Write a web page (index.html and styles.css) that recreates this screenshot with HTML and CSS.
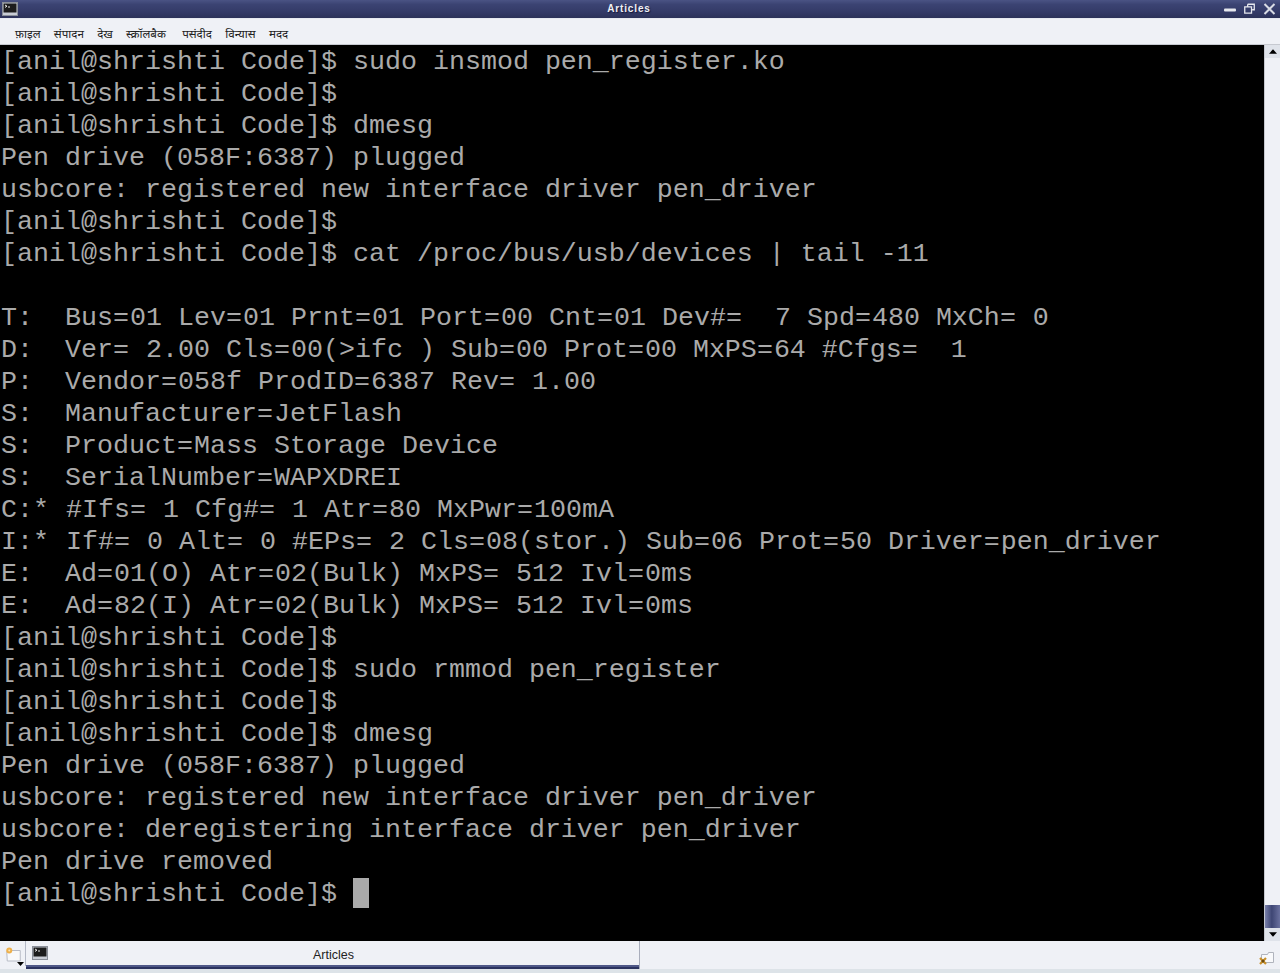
FILE: index.html
```html
<!DOCTYPE html>
<html lang="hi">
<head>
<meta charset="utf-8">
<title>Articles</title>
<link rel="stylesheet" href="styles.css">
</head>
<body>
<div class="window">
  <header class="titlebar">
    <svg class="term-icon" viewBox="0 0 16 14" aria-hidden="true"><rect x="0.5" y="0.5" width="15" height="13" fill="#c8ccd4" stroke="#8a8f99"/><rect x="1.5" y="1.5" width="13" height="9" fill="#1c1c1c"/><path d="M3 3l2 1.2L3 5.4M6 5h2" stroke="#e8e8e8" fill="none"/></svg>
    <div class="title">Articles</div>
    <div class="winbtns">
      <svg viewBox="0 0 12 12" class="winbtn min" aria-hidden="true"><rect x="0" y="5.500" width="12" height="3" rx="1" fill="#e6e8ee"/></svg>
      <svg viewBox="0 0 12 12" class="winbtn restore" aria-hidden="true"><path d="M4 .8h7.200v6H9M4 .8v2.800M.8 3.600h7.400v6.800H.8z" fill="none" stroke="#e6e8ee" stroke-width="1.400"/></svg>
      <svg viewBox="0 0 12 12" class="winbtn close" aria-hidden="true"><path d="M1 1l10 10M11 1L1 11" stroke="#d8dbe4" stroke-width="2"/></svg>
    </div>
  </header>
  <nav class="menubar">
    <span class="menu">फ़ाइल</span><span class="menu">संपादन</span><span class="menu">देख</span><span class="menu wide">स्क्रॉलबैक</span><span class="menu">पसंदीद</span><span class="menu">विन्यास</span><span class="menu">मदद</span>
  </nav>
  <main class="content">
    <div class="terminal">
      <div class="line">[anil@shrishti Code]$ sudo insmod pen_register.ko</div>
      <div class="line">[anil@shrishti Code]$</div>
      <div class="line">[anil@shrishti Code]$ dmesg</div>
      <div class="line">Pen drive (058F:6387) plugged</div>
      <div class="line">usbcore: registered new interface driver pen_driver</div>
      <div class="line">[anil@shrishti Code]$</div>
      <div class="line">[anil@shrishti Code]$ cat /proc/bus/usb/devices | tail -11</div>
      <div class="line"></div>
      <div class="line">T:  Bus<span class="w">=</span>01 Lev<span class="w">=</span>01 Prnt<span class="w">=</span>01 Port<span class="w">=</span>00 Cnt<span class="w">=</span>01 Dev#<span class="w">=</span>  7 Spd<span class="w">=</span>480 MxCh<span class="w">=</span> 0</div>
      <div class="line">D:  Ver<span class="w">=</span> 2.00 Cls<span class="w">=</span>00(&gt;ifc ) Sub<span class="w">=</span>00 Prot<span class="w">=</span>00 MxPS<span class="w">=</span>64 #Cfgs<span class="w">=</span>  1</div>
      <div class="line">P:  Vendor<span class="w">=</span>058f ProdID<span class="w">=</span>6387 Rev<span class="w">=</span> 1.00</div>
      <div class="line">S:  Manufacturer<span class="w">=</span>JetFlash</div>
      <div class="line">S:  Product<span class="w">=</span>Mass Storage Device</div>
      <div class="line">S:  SerialNumber<span class="w">=</span>WAPXDREI</div>
      <div class="line">C:<span class="w">*</span> #Ifs<span class="w">=</span> 1 Cfg#<span class="w">=</span> 1 Atr<span class="w">=</span>80 MxPwr<span class="w">=</span>100mA</div>
      <div class="line">I:<span class="w">*</span> If#<span class="w">=</span> 0 Alt<span class="w">=</span> 0 #EPs<span class="w">=</span> 2 Cls<span class="w">=</span>08(stor.) Sub<span class="w">=</span>06 Prot<span class="w">=</span>50 Driver<span class="w">=</span>pen_driver</div>
      <div class="line">E:  Ad<span class="w">=</span>01(O) Atr<span class="w">=</span>02(Bulk) MxPS<span class="w">=</span> 512 Ivl<span class="w">=</span>0ms</div>
      <div class="line">E:  Ad<span class="w">=</span>82(I) Atr<span class="w">=</span>02(Bulk) MxPS<span class="w">=</span> 512 Ivl<span class="w">=</span>0ms</div>
      <div class="line">[anil@shrishti Code]$</div>
      <div class="line">[anil@shrishti Code]$ sudo rmmod pen_register</div>
      <div class="line">[anil@shrishti Code]$</div>
      <div class="line">[anil@shrishti Code]$ dmesg</div>
      <div class="line">Pen drive (058F:6387) plugged</div>
      <div class="line">usbcore: registered new interface driver pen_driver</div>
      <div class="line">usbcore: deregistering interface driver pen_driver</div>
      <div class="line">Pen drive removed</div>
      <div class="line">[anil@shrishti Code]$ <span class="cursor"></span></div>
    </div>
    <div class="scrollbar">
      <div class="arrow"><svg viewBox="0 0 9 5" class="tri" aria-hidden="true"><path d="M4.500 0L9 5H0z"/></svg></div>
      <div class="track"><div class="thumb"></div></div>
      <div class="arrow"><svg viewBox="0 0 9 5" class="tri" aria-hidden="true"><path d="M0 0h9L4.500 5z"/></svg></div>
    </div>
  </main>
  <footer class="taskbar">
    <div class="launcher">
      <svg class="launch-icon" viewBox="0.500 1 15.500 15" aria-hidden="true"><path d="M2 5.500h3l1-1h9.500v10.500h-13z" fill="#f8f9fb" stroke="#b8bcc6"/><circle cx="4.500" cy="4.500" r="3" fill="#eeb04a"/><circle cx="4.500" cy="4.500" r="1" fill="#fbe7b8"/></svg>
      <svg class="drop" viewBox="0 0 7 4" aria-hidden="true"><path d="M0 0h7L3.500 4z"/></svg>
    </div>
    <div class="task">
      <svg class="term-icon" viewBox="0 0 16 14" aria-hidden="true"><rect x="0.500" y="0.500" width="15" height="13" fill="#c8ccd4" stroke="#8a8f99"/><rect x="1.500" y="1.500" width="13" height="9" fill="#1c1c1c"/><path d="M3 3l2 1.200L3 5.400M6 5h2" stroke="#e8e8e8" fill="none"/></svg>
      <span class="task-label">Articles</span>
    </div>
    <div class="tray">
      <svg class="tray-icon" viewBox="0 0 16 16" aria-hidden="true"><path d="M2.500 4.500h6l1-2h5v10h-12z" fill="#f8f9fb" stroke="#b0b4bd"/><path d="M1 8l6 6M7 8l-6 6" stroke="#c8902a" stroke-width="2.200"/><circle cx="4" cy="11" r="1.500" fill="#6a4a10"/></svg>
    </div>
  </footer>
</div>
</body>
</html>
```
FILE: styles.css
```css
* { box-sizing: border-box; }
html, body { margin: 0; padding: 0; height: 100%; background: #000; overflow: hidden; }
.window { width: 1280px; height: 973px; display: flex; flex-direction: column; }

.titlebar {
  height: 19px; flex: none; display: flex; align-items: center; padding: 0 4px 1px 2px;
  background: linear-gradient(#4a5384 0, #3b4372 25%, #343b68 65%, #2c3259 100%);
  border-bottom: 1px solid #e6e9f0;
}
.title {
  flex: 1; text-align: center; padding-left: 16px;
  font: 700 10px/15px "Liberation Sans", sans-serif; letter-spacing: .85px; color: #f0f1f5;
  text-shadow: 1px 1px 1px #14183a;
}
.term-icon { width: 16px; height: 14px; display: block; flex: none; }
.winbtns { display: flex; gap: 8px; align-items: center; }
.winbtn { display: block; height: 12px; }
.min { width: 12px; }
.restore { width: 11px; }
.close { width: 13px; }

.menubar {
  height: 26px; flex: none; display: flex; align-items: center; padding: 4px 0 0 15px; gap: 13.300px;
  background: #eff1f6; border-bottom: 1px solid #c6c9d0;
  font: 11.600px/16px "Noto Sans", "Noto Sans Devanagari", "Lohit Devanagari", "DejaVu Sans", sans-serif; color: #222;
}
.menu.wide { margin-right: 3px; }

.content { flex: 1; min-height: 0; display: flex; background: #000; }
.terminal {
  flex: 1; padding: 1px 0 0 1px; background: #000; color: #aaa; overflow: hidden;
  font: 26.67px/32px "Liberation Mono", monospace;
}
.line { height: 32px; white-space: pre; }
.w { letter-spacing: 1px; }
.cursor { display: inline-block; width: 16px; height: 30px; background: #aaa; vertical-align: -7px; }

.scrollbar { width: 16px; flex: none; display: flex; flex-direction: column; background: #eff1f6; border-left: 1px solid #c6c9d0; }
.arrow { height: 13px; flex: none; display: flex; align-items: center; justify-content: center; background: #dfe3ea; }
.tri { width: 8px; height: 5px; display: block; }
.track { flex: 1; display: flex; flex-direction: column; justify-content: flex-end; }
.thumb { height: 23px; background: linear-gradient(90deg, #7a81ac, #3e4674 45%, #6a719f); }

.taskbar { height: 32px; flex: none; display: flex; background: linear-gradient(to top, #dde3e8 4px, #eff1f6 4px); }
.launcher { width: 26px; flex: none; height: 25px; position: relative; padding: 6px 0 0 5px; border-right: 1px solid #b4b9c6; }
.launch-icon { width: 16px; height: 15px; display: block; }
.drop { position: absolute; left: 17px; top: 21px; width: 7px; height: 4px; display: block; }
.task {
  width: 614px; flex: none; height: 28px; display: flex; align-items: flex-start; padding: 5px 0 0 6px;
  box-shadow: inset 0 -2px #2b3360, inset 0 -4px #4f5888; border-right: 1px solid #a9aebc;
}
.task-label { flex: 1; text-align: center; font: 12.500px/18px "Liberation Sans", sans-serif; color: #222; padding-right: 20px; }
.tray { flex: 1; display: flex; justify-content: flex-end; align-items: flex-start; padding: 9px 5px 0 0; }
.tray-icon { width: 16px; height: 16px; display: block; }
```
